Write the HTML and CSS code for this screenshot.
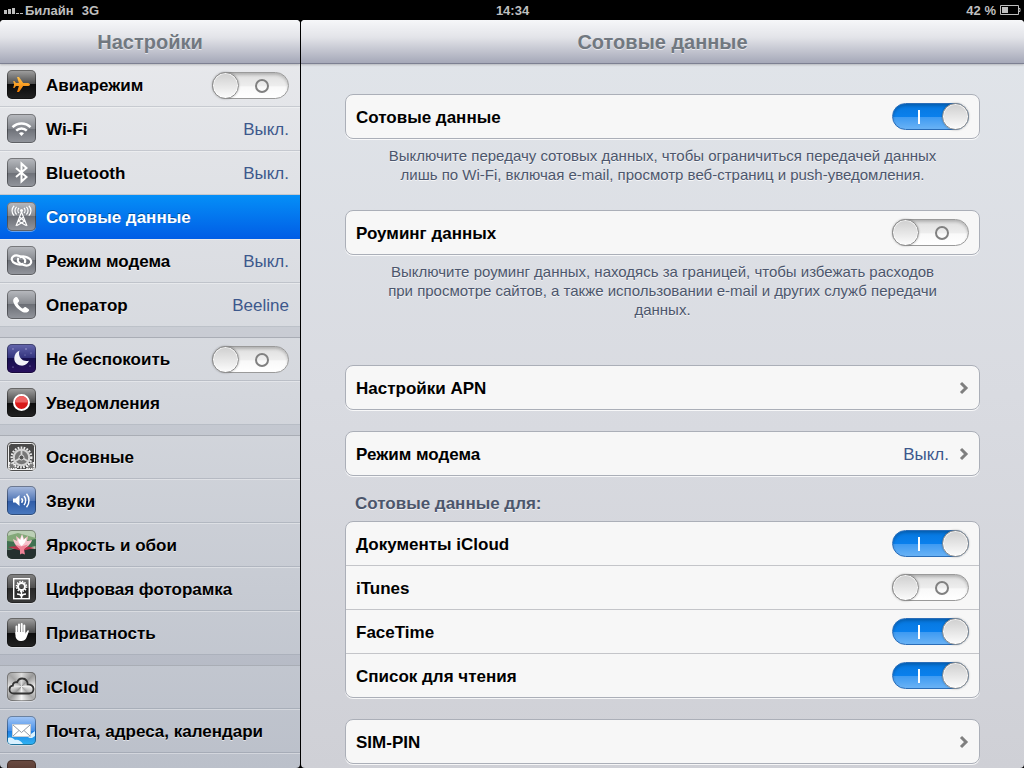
FILE: index.html
```html
<!DOCTYPE html>
<html lang="ru">
<head>
  <meta charset="UTF-8" />
  <title>Настройки</title>
  <meta name="viewport" content="width=device-width, initial-scale=1.0" />
  <link rel="stylesheet" href="styles.css">
</head>
<body>

<div class="statusbar">
  <div class="status-left">
    <svg class="signal" viewBox="0 0 20 8" aria-hidden="true">
      <path d="M0 4h3v4H0zM4 3h3v5H4zM8 2h3v6H8zM12 7h3v1h-3zM16 7h3v1h-3z"/>
    </svg>
    <span class="carrier">Билайн</span>
    <span>3G</span>
  </div>
  <div class="status-time">14:34</div>
  <div class="status-right">
    <span>42 %</span>
    <svg class="battery" viewBox="0 0 21 10" aria-hidden="true">
      <path class="battery-case" d="M.5.5h18v9H.5zM18.500 3.500h1.500v3h-1.500"/>
      <path d="M2 2h6v6H2z"/>
    </svg>
  </div>
</div>

<div class="panes">
  <section class="pane sidebar">
    <header class="titlebar"><h1>Настройки</h1></header>
    <nav class="menu">
      <div class="menu-group">
        <label class="menu-row">
          <svg class="icon black" viewBox="0 0 29 29">
            <defs>
              <linearGradient id="plane" x1="0" y1="0" x2="0" y2="1">
                <stop offset="0" stop-color="#ffc24a"/>
                <stop offset="1" stop-color="#f07a00"/>
              </linearGradient>
            </defs>
            <path fill="url(#plane)" d="M23 14.500c0 .9-1.400 1.600-3 1.600h-3.800l-4.200 6h-2l1.900-6H9l-1.600 2H6.200l.9-3.600-.9-3.600h1.200L9 12.900h2.900L10 6.900h2l4.200 6H20c1.600 0 3 .7 3 1.600z"/>
          </svg>
          <span class="menu-name">Авиарежим</span>
          <input class="switch" type="checkbox">
        </label>
        <a class="menu-row" href="#wifi">
          <svg class="icon gray" viewBox="0 0 29 29">
            <g fill="none" stroke="#fff" stroke-width="2.500">
              <path d="M5.500 13.200c5-5 13-5 18 0"/>
              <path d="M9.200 16.700c3-3 7.600-3 10.600 0"/>
            </g>
            <path fill="#fff" d="M14.500 22l-2.500-2.700c1.500-1.300 3.500-1.300 5 0z"/>
          </svg>
          <span class="menu-name">Wi-Fi</span>
          <span class="value">Выкл.</span>
        </a>
        <a class="menu-row" href="#bluetooth">
          <svg class="icon gray" viewBox="0 0 29 29">
            <path fill="none" stroke="#fff" stroke-width="2" d="M9 10l10.500 9-5 4.500v-18l5 4.500L9 19"/>
          </svg>
          <span class="menu-name">Bluetooth</span>
          <span class="value">Выкл.</span>
        </a>
        <a class="menu-row selected" href="#cellular" aria-current="page">
          <svg class="icon gray" viewBox="0 0 29 29">
            <g fill="none" stroke="#fff" stroke-width="1.200">
              <path d="M14.500 10L9 24M14.500 10L20 24M12.500 15l6 5M16.500 15l-6 5M10 23.500l7-4M19 23.500l-7-4"/>
              <path d="M12 6c-1.400 1.400-1.400 3.800 0 5.200M17 6c1.400 1.400 1.400 3.800 0 5.200M9.600 4.800c-2.200 2.200-2.200 5.500 0 7.700M19.400 4.800c2.200 2.200 2.200 5.500 0 7.700M7.200 3.800c-2.900 2.800-2.900 7 0 9.800M21.800 3.800c2.900 2.800 2.900 7 0 9.800"/>
            </g>
            <circle cx="14.500" cy="8.500" r="1.500" fill="#fff"/>
          </svg>
          <span class="menu-name">Сотовые данные</span>
        </a>
        <a class="menu-row" href="#hotspot">
          <svg class="icon gray" viewBox="0 0 29 29">
            <g fill="none" stroke="#fff" stroke-width="2.200" stroke-linecap="round">
              <path d="M15.500 18c-1.500.8-3.300.7-5 .2l-2.200-.8C4.300 15.900 3.900 12.300 6 10.600c1.700-1.400 4.200-1.300 6.300-.6l2.300.8c3 1.100 4.200 3.400 3.300 5.500"/>
              <path d="M13.500 11c1.500-.8 3.300-.7 5-.2l2.200.8c4 1.500 4.400 5.100 2.300 6.800-1.700 1.400-4.200 1.300-6.300.6l-2.300-.8c-3-1.100-4.200-3.400-3.300-5.500"/>
            </g>
          </svg>
          <span class="menu-name">Режим модема</span>
          <span class="value">Выкл.</span>
        </a>
        <a class="menu-row" href="#carrier">
          <svg class="icon gray" viewBox="0 0 29 29">
            <path fill="#fff" d="M8.300 7.300c1-.7 1.700-.4 2.300.5l1.300 2.300c.5.900.2 1.500-.6 2.100-.9.600-.9 1-.4 1.900 1 1.800 2.300 3.100 4 4.100.9.500 1.300.4 1.900-.4.600-.8 1.300-1 2.100-.5l2.500 1.600c.9.600 1 1.300.3 2.200-1.400 1.800-3.800 1.900-6.200.8-4.200-2-7.400-5.200-9-9.300-.8-2.300-.2-4.200 1.800-5.300z"/>
          </svg>
          <span class="menu-name">Оператор</span>
          <span class="value">Beeline</span>
        </a>
      </div>

      <div class="menu-group">
        <label class="menu-row">
          <svg class="icon night" viewBox="0 0 29 29">
            <path fill="#f1f1f8" d="M12.500 6.500c-2.200 5.800 2.700 12 9.500 10.300-1.300 3.300-4.600 5.200-8 4.800C9.800 21.200 7 17.800 7.300 13.700c.2-3.200 2.200-6 5.200-7.200z"/>
            <g fill="#a9a7d8">
              <circle cx="6" cy="5" r=".7"/><circle cx="19" cy="5" r=".8"/><circle cx="24" cy="9" r=".6"/>
              <circle cx="18" cy="11" r=".5"/><circle cx="6" cy="23" r=".6"/><circle cx="23" cy="22" r=".6"/>
            </g>
          </svg>
          <span class="menu-name">Не беспокоить</span>
          <input class="switch" type="checkbox">
        </label>
        <a class="menu-row" href="#notifications">
          <svg class="icon black" viewBox="0 0 29 29">
            <circle cx="14.500" cy="14.500" r="7.500" fill="#d81818" stroke="#fff" stroke-width="2"/>
            <path fill="#ef6262" d="M8 14.500a6.500 6.500 0 0 1 13 0z"/>
          </svg>
          <span class="menu-name">Уведомления</span>
        </a>
      </div>

      <div class="menu-group">
        <a class="menu-row" href="#general">
          <svg class="icon gears" viewBox="0 0 29 29">
            <rect x="1.500" y="1.500" width="26" height="26" rx="3" fill="#4a4a4a" stroke="#f0f0f0"/>
            <circle cx="14.500" cy="15.500" r="9.800" fill="none" stroke="#ececec" stroke-width="2.400" stroke-dasharray="1.700 1.300"/>
            <circle cx="14.500" cy="15.500" r="7.800" fill="#777" stroke="#d2d2d2" stroke-width="2.200"/>
            <path stroke="#d5d5d5" stroke-width="1.800" d="M14.500 15.500V8M14.500 15.500l7 4M14.500 15.500l-7 4"/>
            <circle cx="14.500" cy="15.500" r="2.500" fill="#555" stroke="#ddd"/>
            <g fill="#777" stroke="#f4f4f4" stroke-width="1.800" stroke-dasharray="1.400 1">
              <path d="M2 21a6 6 0 0 1 7 6H2zM27 21a6 6 0 0 0-7 6h7z"/>
            </g>
          </svg>
          <span class="menu-name">Основные</span>
        </a>
        <a class="menu-row" href="#sounds">
          <svg class="icon blue" viewBox="0 0 29 29">
            <path fill="#fff" d="M6 12.500h2.500l4-3.500v11l-4-3.500H6z"/>
            <g fill="none" stroke="#fff" stroke-width="1.500">
              <path d="M14.500 12.200c1.200 1.300 1.200 3.300 0 4.600M17 10c2.200 2.500 2.200 6.500 0 9M19.500 7.800c3.300 3.700 3.300 9.700 0 13.400"/>
            </g>
          </svg>
          <span class="menu-name">Звуки</span>
        </a>
        <a class="menu-row" href="#wallpaper">
          <svg class="icon lotus" viewBox="0 0 29 29">
            <path fill="#83a879" d="M0 6l11-3 18 5v5L0 14z"/>
            <path fill="#3f7050" d="M0 11l9 1 4 5-13 3zM18 11l11-2v7l-9 2z"/>
            <path fill="#25312f" d="M0 20l12-2 17 1v10H0z"/>
            <path fill="#b92f4a" d="M1 17l10-1 4 5zM28 18l-10-2-4 5z"/>
            <path fill="#f6c3cc" d="M14.500 19C9 17 7 13 6 9l4 2-1-5 4 3 2-5 2 5 4-3-1 5 5-1c-1 4-5 8-10.500 9z"/>
            <path fill="#fff" d="M14.500 16C12 14 11 11 11 8.500l2.500 1.500L15 5l1.500 5L19 8c.5 3-2 6-4.500 8z"/>
            <path fill="#ee8296" d="M8 14.500l6 2 7-2-4 5 1 5-3-1-2 1v-5z"/>
          </svg>
          <span class="menu-name">Яркость и обои</span>
        </a>
        <a class="menu-row" href="#frame">
          <svg class="icon dark" viewBox="0 0 29 29">
            <g fill="none" stroke="#fff">
              <rect x="6.700" y="4.700" width="15.600" height="20" stroke-width="1.400"/>
              <circle cx="14.500" cy="12.500" r="3.500" stroke-width="2"/>
              <circle cx="14.500" cy="12.500" r="5" stroke-width="1.600" stroke-dasharray="1.300 1.300"/>
              <path stroke-width="1.500" d="M14.500 17v7M10 20c2 0 4 .8 4.500 2.500.5-1.700 2.500-2.500 4.500-2.500"/>
            </g>
          </svg>
          <span class="menu-name">Цифровая фоторамка</span>
        </a>
        <a class="menu-row" href="#privacy">
          <svg class="icon black" viewBox="0 0 29 29">
            <g fill="none" stroke="#fff" stroke-width="2" stroke-linecap="round">
              <path d="M9.500 8.500V16M12 6.500V15M14.700 6V15M17.300 7.500V16"/>
            </g>
            <path fill="#fff" d="M8.500 14h9.800v1.800l2-3c.7-.9 1.800-.4 1.500.6l-2.300 6.100c-.9 2.300-2.300 3.500-5.200 3.500-3.500 0-5.800-2-5.800-5.500z"/>
          </svg>
          <span class="menu-name">Приватность</span>
        </a>
      </div>

      <div class="menu-group">
        <a class="menu-row" href="#icloud">
          <svg class="icon metal" viewBox="0 0 29 29">
            <path fill="none" stroke="#333" stroke-width="1.800" d="M7 21.500c-2.800 0-4.500-1.900-4.500-4.100 0-2 1.400-3.500 3.300-3.700-.1-2.500 2-4 4.300-3.400 1-2.500 3.200-4 5.500-3.800 3.200.2 5.200 2.700 5 5.800 3.300-.1 5.900 1.700 5.900 4.700 0 2.700-2 4.500-4.500 4.500z"/>
          </svg>
          <span class="menu-name">iCloud</span>
        </a>
        <a class="menu-row" href="#mail">
          <svg class="icon mail" viewBox="0 0 29 29">
            <path fill="#d8f1ff" d="M1 22c3-1 5 0 7 2 3-1 6 1 8 4H4c-2 0-3-1-3-3zM28 15l-4 3-3 1 3 1-3 2h4l3-2z"/>
            <rect x="5.500" y="8.500" width="18" height="12" fill="#fff" stroke="#c7ced6"/>
            <path fill="none" stroke="#929aa4" d="M6 9l8.500 7.500L23 9M6 20l6-5.500M23 20l-6-5.500"/>
          </svg>
          <span class="menu-name">Почта, адреса, календари</span>
        </a>
        <a class="menu-row" href="#notes" aria-label="Заметки">
          <svg class="icon brown" viewBox="0 0 29 29"></svg>
        </a>
      </div>
    </nav>
  </section>

  <main class="pane detail">
    <header class="titlebar"><h2>Сотовые данные</h2></header>
    <div class="content">
      <div class="card">
        <label class="row"><span>Сотовые данные</span><input class="switch" type="checkbox" checked></label>
      </div>
      <p class="note">Выключите передачу сотовых данных, чтобы ограничиться передачей данных лишь по Wi-Fi, включая e-mail, просмотр веб-страниц и push-уведомления.</p>

      <div class="card">
        <label class="row"><span>Роуминг данных</span><input class="switch" type="checkbox"></label>
      </div>
      <p class="note note-last">Выключите роуминг данных, находясь за границей, чтобы избежать расходов при просмотре сайтов, а также использовании e-mail и других служб передачи данных.</p>

      <div class="card spaced">
        <a class="row" href="#apn">
          <span>Настройки APN</span>
          <svg class="chevron" viewBox="0 0 10 14"><path d="M2 2l5 5-5 5"/></svg>
        </a>
      </div>

      <div class="card">
        <a class="row" href="#hotspot">
          <span>Режим модема</span>
          <span class="value">Выкл.</span>
          <svg class="chevron" viewBox="0 0 10 14"><path d="M2 2l5 5-5 5"/></svg>
        </a>
      </div>

      <h3 class="card-title">Сотовые данные для:</h3>
      <div class="card spaced">
        <label class="row"><span>Документы iCloud</span><input class="switch" type="checkbox" checked></label>
        <label class="row"><span>iTunes</span><input class="switch" type="checkbox"></label>
        <label class="row"><span>FaceTime</span><input class="switch" type="checkbox" checked></label>
        <label class="row"><span>Список для чтения</span><input class="switch" type="checkbox" checked></label>
      </div>

      <div class="card">
        <a class="row" href="#simpin">
          <span>SIM-PIN</span>
          <svg class="chevron" viewBox="0 0 10 14"><path d="M2 2l5 5-5 5"/></svg>
        </a>
      </div>
    </div>
  </main>
</div>

</body>
</html>
```
FILE: styles.css
```css
*, *::before, *::after { box-sizing: border-box; }
body {
  font-family: "Liberation Sans", Arial, sans-serif;
  background: #000;
  margin: 0;
  height: 100vh;
  display: flex;
  flex-direction: column;
  overflow: hidden;
}
a { color: inherit; text-decoration: none; }
h1, h2, h3, p { margin: 0; }

/* status bar */
.statusbar {
  height: 20px;
  flex: none;
  display: grid;
  grid-template-columns: 1fr auto 1fr;
  align-items: center;
  padding: 0 3px 0 4px;
  color: #bfbfbf;
  font-size: 13px;
  font-weight: bold;
}
.status-left, .status-right { display: flex; align-items: center; }
.status-right { justify-content: flex-end; gap: 4px; }
.carrier { margin: 0 8px 0 1px; }
.signal { width: 20px; height: 8px; fill: #bfbfbf; }
.battery { width: 21px; height: 10px; fill: #bfbfbf; }
.battery-case { fill: none; stroke: #bfbfbf; }

/* panes */
.panes {
  flex: 1;
  min-height: 0;
  display: flex;
  gap: 1px;
}
.pane {
  display: flex;
  flex-direction: column;
  overflow: hidden;
  border-radius: 4px;
}
.sidebar {
  width: 300px;
  flex: none;
  background: linear-gradient(#e9eaed, #d4d7dd 50%, #bbc0ca);
}
.detail {
  flex: 1;
  background: linear-gradient(#e1e5ea, #d9dbe1 50%, #cfd0d6);
}
.titlebar {
  height: 43px;
  flex: none;
  position: relative;
  display: flex;
  align-items: center;
  justify-content: center;
  background: linear-gradient(#f6f7f9, #e3e4e9 40%, #a5a8b8);
  box-shadow: 0 1px 0 #7d8092, 0 2px 2px rgba(0,0,0,0.2);
}
.titlebar h1, .titlebar h2 {
  font-size: 20px;
  line-height: 24px;
  color: #717880;
  text-shadow: 0 1px 0 rgba(255,255,255,0.6);
}

/* left menu */
.menu-group + .menu-group {
  border-top: 10px solid rgba(120,130,150,0.15);
}
.menu-group + .menu-group .menu-row:first-child { box-shadow: inset 0 1px 0 #a9adb5; }
.menu-row {
  height: 44px;
  display: flex;
  align-items: center;
  gap: 10px;
  padding: 0 11px 0 7px;
  border-bottom: 1px solid rgba(60,70,90,0.17);
  box-shadow: inset 0 1px 0 rgba(255,255,255,0.35);
  font-size: 17px;
  cursor: pointer;
}
.menu-row span { padding-top: 2px; }
.menu-name {
  flex: 1;
  white-space: nowrap;
  font-weight: bold;
  text-shadow: 0 1px 0 rgba(255,255,255,0.6);
}
.menu-row.selected {
  background: linear-gradient(#058ff7, #015ee6);
  border-bottom-color: #015ee6;
  box-shadow: none;
  color: #fff;
}
.selected .menu-name { text-shadow: 0 -1px 0 rgba(0,0,0,0.4); }
.value { color: #3d588c; }

.icon {
  width: 29px;
  height: 29px;
  flex: none;
  border-radius: 5px;
  box-shadow: inset 0 0 0 1px rgba(0,0,0,0.35), 0 1px 0 rgba(255,255,255,0.4);
}
.black { background: linear-gradient(#a3a3a3, #4a4a4a 50%, #0c0c0c 50%, #222); }
.dark { background: linear-gradient(#858585, #4c4c4c 50%, #282828 50%, #3a3a3a); }
.gray { background: linear-gradient(#b9bbc0, #85888e 50%, #6c6f76 50%, #94979e); }
.night { background: linear-gradient(#6668ae, #30307a 50%, #17104f 50%, #2a1160); }
.gears { background: #777; }
.blue { background: linear-gradient(#a9bce0, #5277b6 50%, #2f5ba6 50%, #4b7ac0); }
.lotus { background: #bcd0b6; }
.metal { background: conic-gradient(#ddd, #999, #eee, #aaa, #f4f4f4, #999, #e4e4e4, #a5a5a5, #ddd); }
.mail { background: linear-gradient(#a6c8f6, #4a92ea 50%, #1f7ce4 50%, #2fb5f3); }
.brown { background: linear-gradient(#6b4b42, #3a201a); }

/* on/off switch */
.switch {
  appearance: none;
  position: relative;
  width: 77px;
  height: 27px;
  flex: none;
  margin: 0;
  border: 1px solid #9a9a9a;
  border-radius: 14px;
  background: linear-gradient(#dedede, #ededed 50%, #f9f9f9 56%, #fff);
  box-shadow: inset 0 2px 3px rgba(0,0,0,0.2);
  cursor: pointer;
}
.menu-row .switch { margin-top: 2px; }
.switch::before {
  content: "";
  position: absolute;
  top: -1px;
  left: -1px;
  width: 27px;
  height: 27px;
  border: 1px solid #8b8b8b;
  border-radius: 50%;
  background: linear-gradient(#cfcfcf, #fcfcfc);
  box-shadow: inset 0 0 0 1px rgba(255,255,255,0.7), 0 0 2px rgba(0,0,0,0.3);
}
.switch::after {
  content: "";
  position: absolute;
  top: 6px;
  left: 42px;
  width: 14px;
  height: 14px;
  border: 2px solid #808080;
  border-radius: 50%;
}
.switch:checked {
  border-color: #2a6db8;
  background: linear-gradient(#0677de, #0a80ed 52%, #3f9bf2 54%, #69b2f5);
}
.switch:checked::before { left: 49px; }
.switch:checked::after {
  left: 25px;
  width: 2px;
  border: 0;
  border-radius: 0;
  background: #fff;
}

/* right side */
.content { padding: 31px 44px 0; }
.card {
  background: #f7f7f7;
  border: 1px solid #abafb8;
  border-radius: 8px;
  box-shadow: 0 1px 0 rgba(255,255,255,0.8);
}
.row {
  height: 44px;
  display: flex;
  align-items: center;
  padding: 0 10px;
  border-bottom: 1px solid #c4c5c9;
  font-size: 17px;
  cursor: pointer;
}
.row:last-child { height: 43px; border-bottom: 0; }
.row span { padding-top: 2px; }
.row span:first-child { flex: 1; font-weight: bold; }
.chevron {
  width: 10px;
  height: 14px;
  margin-left: 10px;
  fill: none;
  stroke: #7f7f7f;
  stroke-width: 3;
}
.spaced { margin-bottom: 21px; }
.note {
  padding: 7px 34px 26px;
  font-size: 15px;
  line-height: 19px;
  text-align: center;
  color: #4c566c;
  text-shadow: 0 1px 0 rgba(255,255,255,0.7);
}
.note-last { padding-bottom: 46px; }
.card-title {
  padding: 18px 10px 7px;
  font-size: 17px;
  line-height: 20px;
  color: #4c566c;
  text-shadow: 0 1px 0 rgba(255,255,255,0.7);
}
```
